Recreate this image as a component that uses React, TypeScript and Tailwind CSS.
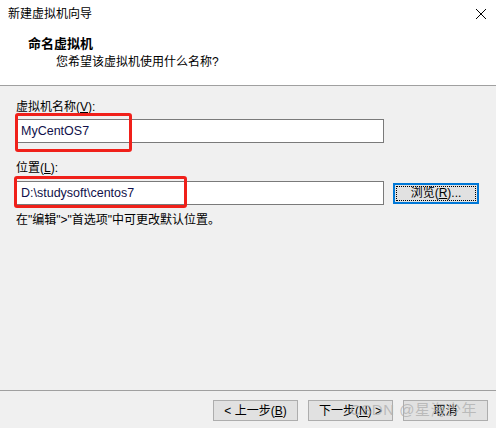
import React from "react";

const ui = "font-['Liberation_Sans','Noto_Sans_CJK_SC',sans-serif]";

function WinButton({ children, focused }: { children: React.ReactNode; focused?: boolean }) {
  if (focused) {
    return (
      <button className="w-[86px] h-[21px] border-2 border-[#0078d7] bg-[#e1e1e1] p-[1px] flex">
        <span className="flex-1 flex items-center justify-center border border-dotted border-black text-[12px] leading-none text-black">
          {children}
        </span>
      </button>
    );
  }
  return (
    <button className="w-[85px] h-[21px] border border-[#adadad] bg-[#e1e1e1] flex items-center justify-center text-[12px] leading-none text-black">
      {children}
    </button>
  );
}

export default function App() {
  return (
    <div className={`relative w-[496px] h-[428px] bg-[#f0f0f0] flex flex-col overflow-hidden ${ui}`}>
      {/* cabeçalho branco */}
      <div className="bg-white h-[86px] border-b border-[#a0a0a0] flex flex-col">
        <div className="h-[28px] flex items-center justify-between pl-[8px] pr-[8px]">
          <span className="text-[12px] leading-none text-black">新建虚拟机向导</span>
          <svg width="12" height="12" viewBox="0 0 12 12" className="mr-[1px] -mt-[1px]">
            <path d="M1 1 L11 11 M11 1 L1 11" stroke="#000" strokeWidth="1" />
          </svg>
        </div>
        <div className="pl-[28px] pt-[9px] text-[13px] font-bold leading-none text-black">命名虚拟机</div>
        <div className="pl-[56px] pt-[6px] text-[12px] leading-none text-black">您希望该虚拟机使用什么名称?</div>
      </div>

      {/* corpo */}
      <div className="flex-1 flex flex-col px-[16px] pt-[15px]">
        <div className="text-[12px] leading-none text-black">
          虚拟机名称(<span className="underline">V</span>):
        </div>
        <div className="mt-[6px] w-[368px] h-[24px] bg-white border border-[#7a7a7a] flex items-center pl-[4px] text-[12.5px] text-[#10104a]">
          MyCentOS7
        </div>

        <div className="mt-[19px] text-[12px] leading-none text-black">
          位置(<span className="underline">L</span>):
        </div>
        <div className="mt-[7px] flex items-center">
          <div className="w-[368px] h-[24px] bg-white border border-[#7a7a7a] flex items-center pl-[4px] text-[12.5px] text-[#10104a]">
            D:\studysoft\centos7
          </div>
          <div className="ml-[9px]">
            <WinButton focused>
              浏览(<span className="underline">R</span>)...
            </WinButton>
          </div>
        </div>
        <div className="mt-[9px] text-[12px] leading-none text-black">在"编辑"&gt;"首选项"中可更改默认位置。</div>
      </div>

      {/* rodapé */}
      <div className="h-[38px] border-t border-[#a0a0a0] flex items-start justify-end gap-[10px] pr-[8px] pt-[9px]">
        <WinButton>
          &lt; 上一步(<span className="underline">B</span>)
        </WinButton>
        <WinButton>
          下一步(<span className="underline">N</span>) &gt;
        </WinButton>
        <WinButton>取消</WinButton>
      </div>

      {/* marcações vermelhas */}
      <div className="absolute left-[15px] top-[113px] w-[117px] h-[39px] border-[3px] border-[#f0201a] rounded-[3px]" />
      <div className="absolute left-[14px] top-[176px] w-[173px] h-[32px] border-[3px] border-[#f0201a] rounded-[3px]" />

      {/* marca d'água */}
      <div className="absolute left-[350px] top-[402px] text-[15px] leading-none text-[#b0b0b0]/80 tracking-[0.5px]">
        CSDN @星海少年
      </div>
    </div>
  );
}
